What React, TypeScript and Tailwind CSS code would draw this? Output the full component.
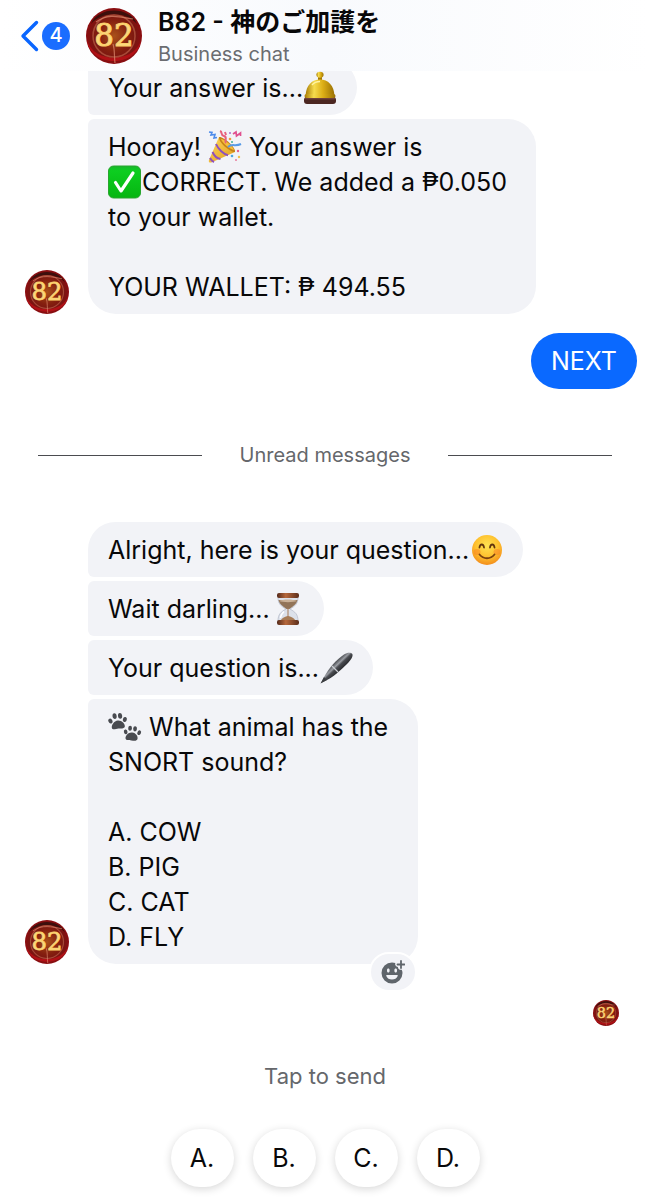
import { useId } from 'react';
import type { ReactNode } from 'react';
import clsx from 'clsx';

interface IBubble {
  id: string;
  content: ReactNode;
  className?: string;
}

// * Emoji
const emojiClass = 'inline-block h-[34px] w-[34px] align-middle -mt-1';

const BellEmoji = () => (
  <svg className={emojiClass} viewBox="0 0 34 34" role="img" aria-label="bell">
    <defs>
      <linearGradient id="bell-dome" x1="0" x2="1" y1="0" y2="0">
        <stop offset="0" stopColor="#a87c05" />
        <stop offset="0.3" stopColor="#f6dc4e" />
        <stop offset="0.6" stopColor="#dcae16" />
        <stop offset="1" stopColor="#997004" />
      </linearGradient>
    </defs>
    <rect x="1" y="26" width="32" height="7" rx="3" fill="#4b2621" />
    <rect x="2" y="26" width="30" height="2.5" rx="1" fill="#71413a" />
    <rect x="15" y="4" width="4" height="6" fill="#a27808" />
    <ellipse cx="17" cy="3.8" rx="3.6" ry="3" fill="url(#bell-dome)" />
    <path d="M2.5 25C3 14 9 8.5 17 8.5S31 14 31.5 25Z" fill="url(#bell-dome)" />
    <rect x="1.5" y="23" width="31" height="4" rx="2" fill="url(#bell-dome)" />
    <path d="M9 14c2-2.5 5-3.5 8-3.5" stroke="#fff3a4" strokeWidth="1.5" fill="none" />
  </svg>
);

const PartyEmoji = () => (
  <svg className={emojiClass} viewBox="0 0 34 34" role="img" aria-label="party popper">
    <defs>
      <linearGradient id="party-cone" x1="0" x2="1" y1="0" y2="1">
        <stop offset="0" stopColor="#ffd95c" />
        <stop offset="1" stopColor="#e19a1c" />
      </linearGradient>
    </defs>
    <path d="M11 7 1 30c-.8 2 .6 3 2.4 2.4L27 22C24 16 17 9 11 7Z" fill="url(#party-cone)" />
    <path d="M8 14c2 5 8 10.500 12 11.200M4.500 22c1.500 3.500 5 6.500 8 7M2 28c1 2 2 3 4 4" stroke="#8e50bd" strokeWidth="2" fill="none" />
    <path d="M11 7c4-1 17 10 16 15-3 1-17-9-16-15Z" fill="#c78318" />
    <path d="M13 9c3 0 11 6 13 11-4-1-12-7-13-11Z" fill="#f5bd3b" />
    <path d="m1 2 3 .5L3 5l4-.500L6 8l3-.500" stroke="#4c8bea" strokeWidth="1.600" fill="none" />
    <path d="M12 1c3 1 0 4 4 5s0 5 2 7M17 2l1 3" stroke="#e7617c" strokeWidth="2" fill="none" />
    <path d="m25 4 3-2 .5 4 4-3v3" stroke="#e04f8e" strokeWidth="1.700" fill="none" />
    <path d="M20 17c4-4 7 0 13-3" stroke="#579ae7" strokeWidth="2" fill="none" />
    <circle cx="22" cy="9" r="1.300" fill="#f09a3d" />
    <circle cx="24" cy="12" r="1" fill="#3cae96" />
    <circle cx="30" cy="21" r="1.200" fill="#e8608d" />
    <circle cx="24" cy="26" r="1.300" fill="#52a7df" />
    <circle cx="31" cy="27" r="1.200" fill="#f3c04e" />
    <circle cx="28" cy="30" r="1" fill="#e77b9b" />
    <circle cx="22" cy="3" r="1" fill="#a46ad0" />
  </svg>
);

const CheckEmoji = () => (
  <svg className={emojiClass} viewBox="0 0 34 34" role="img" aria-label="check mark">
    <defs>
      <linearGradient id="check-face" x1="0" x2="0" y1="0" y2="1">
        <stop offset="0" stopColor="#19b52d" />
        <stop offset="0.15" stopColor="#0dce20" />
        <stop offset="1" stopColor="#06b511" />
      </linearGradient>
    </defs>
    <rect x="0.5" y="1" width="32" height="32" rx="5" fill="url(#check-face)" stroke="#2aa52f" />
    <path d="m7.500 17.500 5.500 8.500L25 8" stroke="#fff" strokeWidth="3.200" fill="none" strokeLinejoin="round" strokeLinecap="round" />
  </svg>
);

const SmileEmoji = () => (
  <svg className={emojiClass} viewBox="0 0 34 34" role="img" aria-label="smiling face">
    <defs>
      <radialGradient id="smile-face" cx="0.5" cy="0.35" r="0.65">
        <stop offset="0" stopColor="#ffe352" />
        <stop offset="0.6" stopColor="#fec02e" />
        <stop offset="1" stopColor="#f38d1c" />
      </radialGradient>
    </defs>
    <circle cx="18" cy="17" r="15" fill="url(#smile-face)" />
    <ellipse cx="8" cy="19" rx="3.500" ry="3" fill="#f98227" opacity="0.5" />
    <ellipse cx="28" cy="19" rx="3.500" ry="3" fill="#f98227" opacity="0.5" />
    <path d="M10.500 14.500c.5-4 4-4 4.500 0M21 14.500c.5-4 4-4 4.500 0" stroke="#63360e" strokeWidth="1.800" fill="none" strokeLinecap="round" />
    <path d="M10.500 21.500c4 5 11 5 15 0" stroke="#7c420f" strokeWidth="1.800" fill="none" strokeLinecap="round" />
  </svg>
);

const HourglassEmoji = () => (
  <svg className={emojiClass} viewBox="0 0 34 34" role="img" aria-label="hourglass">
    <defs>
      <linearGradient id="hourglass-wood" x1="0" x2="1" y1="0" y2="0">
        <stop offset="0" stopColor="#54291a" />
        <stop offset="0.4" stopColor="#b6683c" />
        <stop offset="1" stopColor="#5b2d1a" />
      </linearGradient>
    </defs>
    <path d="M8 5h20c0 7-3 9-8 12 5 3 8 5 8 12H8c0-7 3-9 8-12-5-3-8-5-8-12Z" fill="#dce1ea" stroke="#b7bdca" strokeWidth="0.800" />
    <path d="M8.500 8h19c-1 4.500-5 6.500-8 9h-3c-3-2.500-7-4.500-8-9Z" fill="#927458" />
    <path d="M9 9c4-2 14-2 18 0-4 1.500-14 1.500-18 0Z" fill="#cbb298" />
    <path d="M17.500 16h1v8c3 1 6 2 7 5h-15c1-3 4-4 7-5Z" fill="#a77c57" />
    <path d="M10.500 26c0-3 2-5 3.500-6.500" stroke="#fff" strokeWidth="1.500" fill="none" />
    <rect x="7" y="1" width="22" height="5" rx="2" fill="url(#hourglass-wood)" />
    <rect x="7" y="28" width="22" height="5" rx="2" fill="url(#hourglass-wood)" />
  </svg>
);

const PenEmoji = () => (
  <svg className={emojiClass} viewBox="0 0 34 34" role="img" aria-label="pen">
    <defs>
      <linearGradient id="pen-body" x1="0.35" x2="0.65" y1="0.35" y2="0.65">
        <stop offset="0" stopColor="#2d2f33" />
        <stop offset="0.35" stopColor="#9a9da3" />
        <stop offset="0.5" stopColor="#4a4c51" />
        <stop offset="1" stopColor="#17181a" />
      </linearGradient>
    </defs>
    <path d="M2 32 5 26C10 17 18 8 25 3.500c4-2.500 8-2 8.500 0S32 9 28 13C21 20 14 26 8 29Z" fill="url(#pen-body)" />
    <path d="m5 26 3 3-6.500 3.500Z" fill="#3b3d41" />
    <path d="m13 15 6 6" stroke="#c9ccd1" strokeWidth="1.200" />
  </svg>
);

const PawsEmoji = () => (
  <svg className={emojiClass} viewBox="0 0 34 34" fill="#494b50" role="img" aria-label="paw prints">
    <g transform="translate(0 2) rotate(-4 10 10)">
      <path d="M10 8.500c4 0 7 4 6.500 6.500s-4 1.500-6.500 1.500S4 18 3.500 15.500 6 8.500 10 8.500Z" />
      <ellipse cx="2.500" cy="8.500" rx="2" ry="2.600" transform="rotate(-20 2.500 8.500)" />
      <ellipse cx="7" cy="4" rx="2.100" ry="2.900" />
      <ellipse cx="12.500" cy="4" rx="2.100" ry="2.900" />
      <ellipse cx="17" cy="8" rx="2" ry="2.600" transform="rotate(20 17 8)" />
    </g>
    <g transform="rotate(6 24 24)">
      <path d="M24 22.500c4 0 6.500 3.500 6 6s-3.500 2-6 2-5.500 1-6-1.500 2-6.500 6-6.500Z" />
      <ellipse cx="17.500" cy="22.500" rx="1.800" ry="2.400" transform="rotate(-20 17.500 22.500)" />
      <ellipse cx="21.500" cy="18.500" rx="1.900" ry="2.600" />
      <ellipse cx="26.500" cy="18.500" rx="1.900" ry="2.600" />
      <ellipse cx="31" cy="22" rx="1.800" ry="2.400" transform="rotate(20 31 22)" />
    </g>
  </svg>
);

const AddReactionIcon = () => (
  <svg className="h-6 w-6" viewBox="0 0 24 24" aria-hidden="true">
    <path
      fill="#5f656b"
      fillRule="evenodd"
      d="M11 2.500c1.300 0 2.300.2 3.300.6-.6 1.900.5 3.700 2.600 3.800.1 2 1.600 3.200 3.800 2.800.5 1 .8 2.200.8 3.300a10.500 10.500 0 1 1-10.500-10.500ZM7.300 8.500c-.8 0-1.300.6-1.300 1.500v1c0 .9.5 1.500 1.300 1.500s1.300-.6 1.300-1.500v-1c0-.9-.5-1.500-1.300-1.500Zm7.400 0c-.8 0-1.300.6-1.300 1.500v1c0 .9.5 1.500 1.300 1.500S16 11.900 16 11v-1c0-.9-.5-1.500-1.300-1.500ZM6 15c-.6 0-.9.4-.7.900.9 2.200 3 3.600 5.700 3.600s4.800-1.400 5.700-3.600c.2-.5-.1-.9-.7-.9Z"
    />
    <path d="M20 1v7M16.500 4.500h7" stroke="#5f656b" strokeWidth="1.800" strokeLinecap="round" />
  </svg>
);

// * Page avatar, red glass ball with gold digits
function Avatar({ className }: { className: string }) {
  const id = useId();

  return (
    <svg className={clsx('shrink-0', className)} viewBox="0 0 56 56" role="img" aria-label="B82">
      <defs>
        <radialGradient id={id} cx="0.5" cy="0.5" r="0.5">
          <stop offset="0" stopColor="#a9511a" />
          <stop offset="0.55" stopColor="#85200f" />
          <stop offset="0.8" stopColor="#7a1511" />
          <stop offset="1" stopColor="#8c0c10" />
        </radialGradient>
      </defs>
      <circle cx="28" cy="28" r="28" fill={`url(#${id})`} />
      <path d="M5 16C12-2 44-2 51 16 40 3 16 3 5 16Z" fill="#3c0f0c" />
      <path d="M1 32c3 28 51 28 54 0-5 22-47 25-54 0Z" fill="#bd1218" opacity="0.8" />
      <circle cx="28" cy="28" r="21" fill="none" stroke="#c36a50" strokeWidth="1.500" opacity="0.6" />
      <path d="M10 14c12-9 24-5 37-3M27 36c2 6 1 12 2 19" stroke="#df8b70" strokeWidth="1.200" fill="none" opacity="0.7" />
      <text
        x="28"
        y="38"
        textAnchor="middle"
        fontFamily="DejaVu Serif, serif"
        fontSize="31"
        fill="#fbd980"
        stroke="#fbd06a"
        strokeWidth="1"
      >
        82
      </text>
    </svg>
  );
}

// * Data
const answerBubbles: IBubble[] = [
  {
    id: 'answer',
    content: <>Your answer is...<BellEmoji /></>,
  },
  {
    id: 'correct',
    className: 'max-w-[448px]',
    content: (
      <>
        Hooray! <PartyEmoji /> Your answer is
        <br />
        <CheckEmoji />CORRECT. We added a ₱0.050 to your wallet.
        <br />
        <br />
        YOUR WALLET: ₱ 494.55
      </>
    ),
  },
];

const questionBubbles: IBubble[] = [
  {
    id: 'alright',
    className: 'rounded-tl-[28px]',
    content: <>Alright, here is your question...<SmileEmoji /></>,
  },
  {
    id: 'wait',
    content: <>Wait darling...<HourglassEmoji /></>,
  },
  {
    id: 'question-is',
    content: <>Your question is...<PenEmoji /></>,
  },
  {
    id: 'question',
    className: 'max-w-[330px]',
    content: (
      <>
        <PawsEmoji /> What animal has the SNORT sound?
        <br />
        <br />
        A. COW
        <br />
        B. PIG
        <br />
        C. CAT
        <br />
        D. FLY
      </>
    ),
  },
];

const replies = ['A.', 'B.', 'C.', 'D.'];

function MessageGroup({ bubbles, canReact }: { bubbles: IBubble[]; canReact?: boolean }) {
  return (
    <div className="flex items-end gap-[19px] pl-[25px] pr-4">
      <Avatar className="h-11 w-11" />

      <div className="relative flex flex-col items-start gap-1">
        {bubbles.map((bubble) => (
          <div
            key={bubble.id}
            className={clsx(
              'rounded-l-[6px] rounded-r-[28px] bg-[#f2f3f7] px-5 pt-[11px] pb-[9px] last:rounded-bl-[28px]',
              bubble.className
            )}
          >
            <p>{bubble.content}</p>
            {canReact && bubble.id === 'question' && (
              <button
                className="absolute -bottom-7 left-[281px] flex h-10 w-12 items-center justify-center rounded-full border-2 border-white bg-[#f2f3f7]"
                type="button"
                aria-label="Add reaction"
              >
                <AddReactionIcon />
              </button>
            )}
          </div>
        ))}
      </div>
    </div>
  );
}

export default function App() {
  return (
    <div className="min-h-screen bg-white font-['Inter','Noto_Sans_CJK_JP',sans-serif] text-[25px] leading-[35px] text-[#080809]">
      {/* Header */}
      <header className="relative z-10 flex h-[71px] items-center bg-gradient-to-r from-white via-[#f8fafd] to-white pl-5">
        <a href="#inbox" className="flex items-center gap-[2px]" aria-label="Back, 4 unread">
          <svg className="h-8 w-5" viewBox="0 0 20 32" fill="none" aria-hidden="true">
            <path d="M16.500 2.500 3 16l13.500 13.500" stroke="#0a66ff" strokeWidth="3.400" strokeLinecap="round" strokeLinejoin="round" />
          </svg>
          <span className="flex h-7 w-7 items-center justify-center rounded-full bg-[#1a6dff] text-[20px] font-medium text-white">
            4
          </span>
        </a>
        <Avatar className="ml-4 h-14 w-14" />
        <div className="ml-4 pt-1">
          <h1 className="text-[25px] leading-8 font-semibold">B82 - 神のご加護を</h1>
          <p className="text-[20px] leading-8 text-[#6b6d71]">Business chat</p>
        </div>
      </header>

      {/* Messages */}
      <main>
        <div className="-mt-[11px]">
          <MessageGroup bubbles={answerBubbles} />
        </div>

        <div className="mt-[19px] flex justify-end pr-[13px]">
          <p className="rounded-full bg-[#0a69ff] px-5 pt-[11px] pb-[10px] text-white">NEXT</p>
        </div>

        {/* Unread divider */}
        <div className="mx-[38px] mt-[49px] flex items-center gap-[38px]">
          <span className="h-px flex-1 bg-[#4b4c50]" />
          <span className="text-[20px] text-[#65676b]">Unread messages</span>
          <span className="h-px flex-1 bg-[#4b4c50]" />
        </div>

        <div className="mt-[49px]">
          <MessageGroup bubbles={questionBubbles} canReact />
        </div>

        {/* Seen marker */}
        <div className="mt-9 flex justify-end pr-[31px]">
          <Avatar className="h-[26px] w-[26px]" />
        </div>
      </main>

      {/* Quick replies */}
      <footer className="mt-[33px] pb-3">
        <p className="text-center text-[22px] text-[#65676b]">Tap to send</p>
        <div className="mt-[35px] flex justify-center gap-[19px]">
          {replies.map((reply) => (
            <button
              key={reply}
              className="h-[58px] w-[63px] rounded-full bg-white shadow-[0_2px_8px_rgba(0,0,0,0.16)]"
              type="button"
            >
              {reply}
            </button>
          ))}
        </div>
      </footer>
    </div>
  );
}
